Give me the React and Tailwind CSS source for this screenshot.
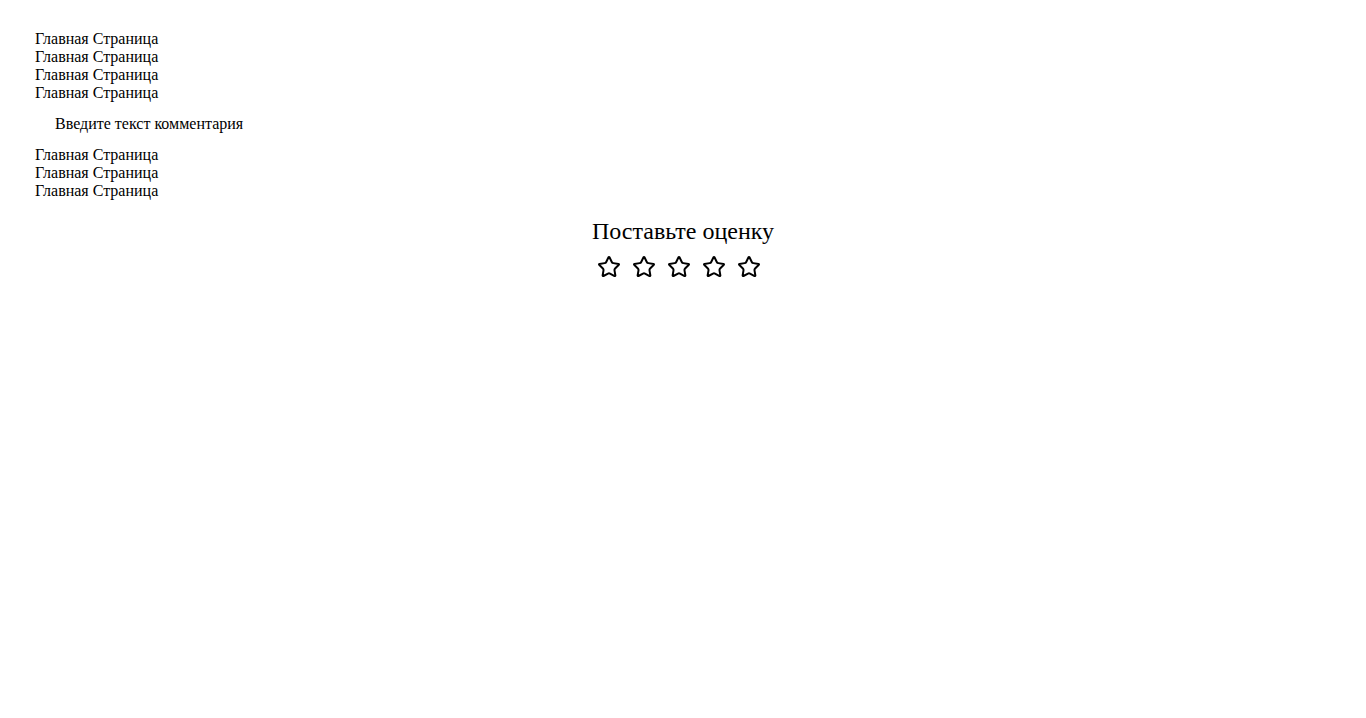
import React from "react";

function Star() {
  return (
    <svg width="24" height="24" viewBox="0 0 24 24" fill="none" stroke="black" strokeWidth="2" strokeLinecap="round" strokeLinejoin="round">
      <path d="M11.525 2.295a.53.53 0 0 1 .95 0l2.31 4.679a2.123 2.123 0 0 0 1.595 1.16l5.166.756a.53.53 0 0 1 .294.904l-3.736 3.638a2.123 2.123 0 0 0-.611 1.878l.882 5.14a.53.53 0 0 1-.771.56l-4.618-2.428a2.122 2.122 0 0 0-1.973 0L6.396 21.01a.53.53 0 0 1-.77-.56l.881-5.139a2.122 2.122 0 0 0-.611-1.879L2.160 9.795a.53.53 0 0 1 .294-.906l5.165-.755a2.122 2.122 0 0 0 1.597-1.160z" />
    </svg>
  );
}

export default function App() {
  const line = "Главная Страница";
  return (
    <div className="min-h-[718px] bg-white text-black font-['Liberation_Serif',serif] text-[16px] leading-[18px] pt-[30px]">
      <div className="pl-[35px]">
        <div>{line}</div>
        <div>{line}</div>
        <div>{line}</div>
        <div>{line}</div>
      </div>
      <div className="pl-[55px] mt-[13px] mb-[13px]">Введите текст комментария</div>
      <div className="pl-[35px]">
        <div>{line}</div>
        <div>{line}</div>
        <div>{line}</div>
      </div>
      <div className="mt-[17px] text-center text-[24px] leading-[28px]">Поставьте оценку</div>
      <div className="mt-[10px] flex justify-center gap-[11px] pr-[8px]">
        <Star />
        <Star />
        <Star />
        <Star />
        <Star />
      </div>
    </div>
  );
}
